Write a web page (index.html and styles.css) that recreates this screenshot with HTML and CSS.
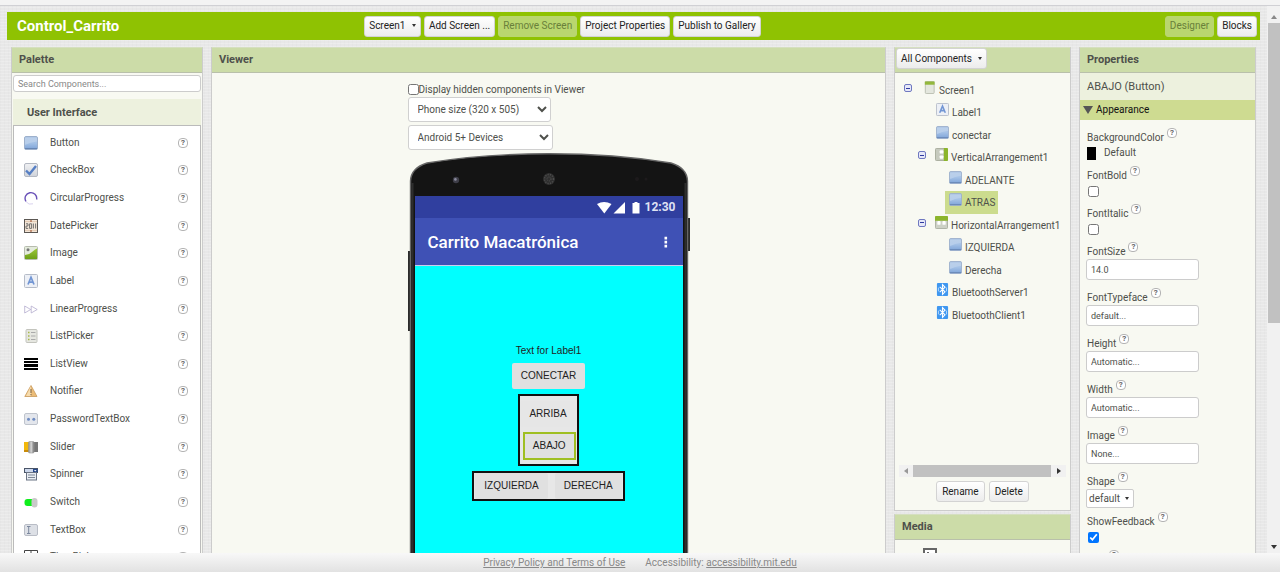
FILE: index.html
```html
<!DOCTYPE html>
<html lang="en">
<head>
<meta charset="utf-8">
<title>Control_Carrito</title>
<link rel="stylesheet" href="styles.css">
</head>
<body>
<svg class="defs" aria-hidden="true">
  <defs>
    <linearGradient id="blue" x1="0" y1="0" x2="0" y2="1"><stop offset="0" stop-color="#a9c3e4"/><stop offset=".5" stop-color="#a4c1e6"/><stop offset="1" stop-color="#7da3d8"/></linearGradient>
    <linearGradient id="grey" x1="0" y1="0" x2="0" y2="1"><stop offset="0" stop-color="#f0f1f3"/><stop offset="1" stop-color="#cfd3da"/></linearGradient>
    <linearGradient id="green" x1="0" y1="0" x2="0" y2="1"><stop offset="0" stop-color="#9cc63a"/><stop offset="1" stop-color="#6da017"/></linearGradient>
    <linearGradient id="metal"><stop offset="0" stop-color="#8a8a8a"/><stop offset=".5" stop-color="#d8d8d8"/><stop offset="1" stop-color="#777"/></linearGradient>
  </defs>
  <symbol id="i-button" viewBox="0 0 14 14"><rect x=".5" y=".5" width="13" height="13" rx="1.5" fill="url(#blue)" stroke="#9db0cc"/><path d="M1 1.5h12v4Q6 6 1 9z" fill="#fff" opacity=".22"/><path d="M1 12.5h12" stroke="#6786b4"/></symbol>
  <symbol id="i-check" viewBox="0 0 14 14"><rect x=".5" y=".5" width="13" height="13" rx="1.5" fill="url(#grey)" stroke="#b3b8c2"/><path d="M2 7.5 5.5 11 12 3" fill="none" stroke="#567fc4" stroke-width="2.4"/></symbol>
  <symbol id="i-circ" viewBox="0 0 14 14"><path d="M2 10.500A5.800 5.800 0 1 1 12.600 8.500" fill="none" stroke="#6a52b8" stroke-width="1.4"/><path d="M2 10.500A5.800 5.800 0 0 0 9 12.800" fill="none" stroke="#d9d2ee"/></symbol>
  <symbol id="i-date" viewBox="0 0 14 14"><rect x=".5" y=".5" width="13" height="13" fill="#f3e6d8" stroke="#5b5753"/><path d="M1 2.5h12M1 11.5h12" stroke="#e4ccb6"/><path d="M7 1v2M7 11v2" stroke="#9b4b28"/><path d="M2 4.8h2v2.2H2v2.4h2.2M5.6 4.8h2v4.6h-2zM9.4 4.5v5M11.6 4.5v5" fill="none" stroke="#666" stroke-width=".9"/></symbol>
  <symbol id="i-image" viewBox="0 0 14 14"><rect x=".5" y=".5" width="13" height="13" rx="1" fill="#e4ebdc" stroke="#b7bcae"/><path d="M1 9Q5 9 8 6t5-3.500V13H1z" fill="url(#green)"/><circle cx="4" cy="3.800" r="1.500" fill="#777"/></symbol>
  <symbol id="i-label" viewBox="0 0 14 14"><rect x=".5" y=".5" width="13" height="13" rx="1" fill="#edf0f6" stroke="#b6bcc8"/><path d="M4 10.500 7 3.200l3 7.300M5 8.200h4" fill="none" stroke="#7296d4" stroke-width="1.700"/></symbol>
  <symbol id="i-linear" viewBox="0 0 14 14"><path d="M.7 4v7l6-3.500zM7.200 4v7l6-3.500z" fill="#fff" stroke="#aaa2c8" stroke-width=".7"/></symbol>
  <symbol id="i-list" viewBox="0 0 14 14"><rect x="2" y=".5" width="11" height="13" rx="1" fill="#e6e7e1" stroke="#c3c4bd"/><path d="M4 3.500h1.500M4 7h1.500M4 10.500h1.500" stroke="#a8b84b" stroke-width="1.500"/><path d="M7 3.500h4.500M7 7h4.500M7 10.500h4.500" stroke="#aaa"/></symbol>
  <symbol id="i-lview" viewBox="0 0 14 14"><path d="M0 1h14v2.200H0zM0 4.200h14v2.200H0zM0 7.400h14v2.200H0zM0 10.600h14v2.200H0z" fill="#000"/></symbol>
  <symbol id="i-notif" viewBox="0 0 14 14"><path d="M7 1.500 13 12.500H.8z" fill="#ebbc78" stroke="#c99a5c" stroke-width=".8"/><path d="M7 2v10H2z" fill="#f6dcae"/><path d="M7 5v4M7 10v1.200" stroke="#8d7350" stroke-width="1.200"/></symbol>
  <symbol id="i-pass" viewBox="0 0 14 14"><rect x=".5" y="1.500" width="13" height="11" rx="1.500" fill="#e3e6ec" stroke="#bfc4cd"/><circle cx="4.500" cy="7.300" r="1.500" fill="#6f8cc2"/><circle cx="9.800" cy="7.300" r="1.500" fill="#6f8cc2"/></symbol>
  <symbol id="i-slider" viewBox="0 0 14 14"><path d="M0 2h5v10H0z" fill="#f2b80c"/><path d="M0 10h5v2H0z" fill="#c98b08"/><path d="M9 2h5v10H9z" fill="#777"/><rect x="4.500" y="1.500" width="5.500" height="11.500" rx="1" fill="url(#metal)" stroke="#999" stroke-width=".6"/></symbol>
  <symbol id="i-spin" viewBox="0 0 14 14"><rect x=".5" y="1.500" width="13" height="4" fill="#cdd8ec" stroke="#4a5568"/><path d="M9 2h4.500v3.500H9z" fill="#27498c"/><path d="m10 3 1.200 1.600L12.500 3z" fill="#fff"/><rect x="2.500" y="5.500" width="10" height="7.500" fill="#e8ecf2" stroke="#6b7484"/><path d="M4 8h7M4 10.500h7" stroke="#7d8796"/></symbol>
  <symbol id="i-switch" viewBox="0 0 14 14"><rect x=".5" y="4" width="11" height="7" rx="3" fill="#10ee1c"/><rect x="7.500" y="3" width="6" height="9.500" rx="3" fill="#c9c9c9"/></symbol>
  <symbol id="i-text" viewBox="0 0 14 14"><rect x=".5" y="1.500" width="13" height="11" rx="1.500" fill="#dde0e6" stroke="#b9bdc6"/><path d="M3 3.500h3.500M4.700 3.500v7M3 10.500h3.500" stroke="#7c889e" fill="none"/></symbol>
  <symbol id="i-time" viewBox="0 0 14 14"><path d="M.5.500h13v13H.5zM.5 6h13M7 .5v13" fill="#fff" stroke="#444"/></symbol>
  <symbol id="i-screen" viewBox="0 0 14 14"><rect x="2.500" y=".5" width="9.500" height="13" rx="1" fill="#e4e7de" stroke="#b9bdb0"/><path d="M2 .5h10.500v3.500H2z" fill="#93b83c"/></symbol>
  <symbol id="i-vert" viewBox="0 0 14 14"><rect x=".5" y=".5" width="13" height="13" rx="1" fill="#c6cabe" stroke="#a5aa9b"/><path d="M9.500 0H13q1 0 1 1v12q0 1-1 1H9.500z" fill="#8cb52c"/><rect x="5" y="2.500" width="4" height="3.500" rx="1" fill="#fff"/><rect x="5" y="8" width="4" height="3.500" rx="1" fill="#fff"/></symbol>
  <symbol id="i-horiz" viewBox="0 0 14 14"><rect x=".5" y=".5" width="13" height="13" rx="1" fill="#cdd1c6" stroke="#a9ada0"/><path d="M0 5V1q0-1 1-1h12q1 0 1 1v4z" fill="#8cb52c"/><rect x="2.500" y="5.500" width="3.500" height="4" rx="1" fill="#fff"/><rect x="8" y="5.500" width="3.500" height="4" rx="1" fill="#fff"/></symbol>
  <symbol id="i-bt" viewBox="0 0 14 14"><rect x="1" width="12" height="14" rx="1" fill="#3f97f0"/><path d="M4 4.200 9.700 9.500 7 12.300V1.700l2.700 2.800L4 9.800" fill="none" stroke="#fff" stroke-width="1.200"/><path d="M11.300 5v4M2.600 5v4" stroke="#b9dafb"/></symbol>
</svg>

<div class="strip"></div>
<div class="main">
  <div class="content">
    <header class="bar">
      <h1>Control_Carrito</h1>
      <div class="bar-mid">
        <button class="btn">Screen1 <i class="caret"></i></button>
        <button class="btn">Add Screen ...</button>
        <button class="btn off" disabled>Remove Screen</button>
        <button class="btn">Project Properties</button>
        <button class="btn">Publish to Gallery</button>
      </div>
      <div class="bar-end">
        <button class="btn off" disabled>Designer</button>
        <button class="btn">Blocks</button>
      </div>
    </header>

    <div class="columns">
      <section class="panel palette">
        <h2 class="head">Palette</h2>
        <input class="search" type="text" placeholder="Search Components..." aria-label="Search Components">
        <h3 class="group">User Interface</h3>
        <div class="listbox"><ul class="list">
          <li><svg class="ic"><use href="#i-button"/></svg><span>Button</span><button class="help">?</button></li>
          <li><svg class="ic"><use href="#i-check"/></svg><span>CheckBox</span><button class="help">?</button></li>
          <li><svg class="ic"><use href="#i-circ"/></svg><span>CircularProgress</span><button class="help">?</button></li>
          <li><svg class="ic"><use href="#i-date"/></svg><span>DatePicker</span><button class="help">?</button></li>
          <li><svg class="ic"><use href="#i-image"/></svg><span>Image</span><button class="help">?</button></li>
          <li><svg class="ic"><use href="#i-label"/></svg><span>Label</span><button class="help">?</button></li>
          <li><svg class="ic"><use href="#i-linear"/></svg><span>LinearProgress</span><button class="help">?</button></li>
          <li><svg class="ic"><use href="#i-list"/></svg><span>ListPicker</span><button class="help">?</button></li>
          <li><svg class="ic crisp"><use href="#i-lview"/></svg><span>ListView</span><button class="help">?</button></li>
          <li><svg class="ic"><use href="#i-notif"/></svg><span>Notifier</span><button class="help">?</button></li>
          <li><svg class="ic"><use href="#i-pass"/></svg><span>PasswordTextBox</span><button class="help">?</button></li>
          <li><svg class="ic"><use href="#i-slider"/></svg><span>Slider</span><button class="help">?</button></li>
          <li><svg class="ic"><use href="#i-spin"/></svg><span>Spinner</span><button class="help">?</button></li>
          <li><svg class="ic"><use href="#i-switch"/></svg><span>Switch</span><button class="help">?</button></li>
          <li><svg class="ic"><use href="#i-text"/></svg><span>TextBox</span><button class="help">?</button></li>
          <li><svg class="ic"><use href="#i-time"/></svg><span>TimePicker</span><button class="help">?</button></li>
        </ul></div>
      </section>

      <section class="panel viewer">
        <h2 class="head">Viewer</h2>
        <div class="stage">
          <label class="hidden-opt"><input type="checkbox" class="cb">Display hidden components in Viewer</label>
          <select class="sel size" aria-label="Screen size"><option>Phone size (320 x 505)</option></select>
          <select class="sel device" aria-label="Device"><option>Android 5+ Devices</option></select>
          <div class="phone">
            <svg class="shell" viewBox="0 0 282 460" aria-hidden="true">
              <rect x="0" y="98" width="4" height="80" fill="#2c2c2c"/>
              <rect x="278" y="65" width="4" height="33" fill="#2c2c2c"/>
              <path d="M2.500 460V28Q3 15 19 10 75 .8 141 .8T263 10q16 5 16.500 18v432z" fill="#141414" stroke="#666" stroke-width="1.400"/>
              <path d="M4.500 460V30M277.500 460V30" stroke="#2e2e2e" stroke-width="2"/>
              <circle cx="48" cy="27" r="3.200" fill="#3e3e48"/><circle cx="47.400" cy="26.400" r="1.300" fill="#8c8ca0"/>
              <circle cx="141" cy="26" r="6" fill="#2f2f2f"/><circle cx="141" cy="26" r="4.500" fill="none" stroke="#4c4c4c" stroke-width="1.500" stroke-dasharray="1.200 1.200"/><circle cx="141" cy="26" r="2" fill="none" stroke="#555" stroke-dasharray="1 1"/>
              <circle cx="229" cy="26" r="2" fill="#1d1a1c"/><circle cx="238" cy="26" r="1.500" fill="#1d1a1c"/>
            </svg>
            <div class="screen">
              <div class="status">
                <svg class="signals" viewBox="0 0 44 13" aria-hidden="true"><path d="M0 3Q7-.8 14.500 3L7.300 12.500z" fill="#fff"/><path d="M28 1v11.500H16.500z" fill="#fff"/><path d="M35.500 2h2V1h3v1h2v10.500h-7z" fill="#fff"/></svg>
                <span>12:30</span>
              </div>
              <div class="appbar"><span>Carrito Macatrónica</span><svg class="dots" viewBox="0 0 4 12" aria-hidden="true"><path d="M.5.800h2.600v2.600H.5zM.5 4.800h2.600v2.600H.5zM.5 8.800h2.600v2.600H.5z" fill="#fff"/></svg></div>
              <div class="canvas">
                <span class="lbl">Text for Label1</span>
                <button class="mock solo">CONECTAR</button>
                <div class="vbox"><button class="mock flat">ARRIBA</button><button class="mock picked">ABAJO</button></div>
                <div class="hbox"><button class="mock">IZQUIERDA</button><button class="mock">DERECHA</button></div>
              </div>
            </div>
          </div>
        </div>
      </section>

      <div class="side">
        <section class="panel comps">
          <div class="head tight"><button class="btn">All Components <i class="caret"></i></button></div>
          <div class="treebox"><ul class="tree">
            <li class="d0"><button class="fold" aria-label="Collapse"></button><svg class="ic"><use href="#i-screen"/></svg><span>Screen1</span></li>
            <li class="d1"><svg class="ic"><use href="#i-label"/></svg><span>Label1</span></li>
            <li class="d1"><svg class="ic"><use href="#i-button"/></svg><span>conectar</span></li>
            <li class="d1f"><button class="fold" aria-label="Collapse"></button><svg class="ic"><use href="#i-vert"/></svg><span>VerticalArrangement1</span></li>
            <li class="d2"><svg class="ic"><use href="#i-button"/></svg><span>ADELANTE</span></li>
            <li class="d2 on"><svg class="ic"><use href="#i-button"/></svg><span>ATRAS</span></li>
            <li class="d1f"><button class="fold" aria-label="Collapse"></button><svg class="ic"><use href="#i-horiz"/></svg><span>HorizontalArrangement1</span></li>
            <li class="d2"><svg class="ic"><use href="#i-button"/></svg><span>IZQUIERDA</span></li>
            <li class="d2"><svg class="ic"><use href="#i-button"/></svg><span>Derecha</span></li>
            <li class="d1"><svg class="ic"><use href="#i-bt"/></svg><span>BluetoothServer1</span></li>
            <li class="d1"><svg class="ic"><use href="#i-bt"/></svg><span>BluetoothClient1</span></li>
          </ul></div>
          <div class="hscroll"><i class="arr left"></i><i class="thumb"></i><i class="arr right"></i></div>
          <div class="actions"><button class="btn">Rename</button><button class="btn">Delete</button></div>
        </section>
        <section class="panel media">
          <h2 class="head">Media</h2>
          <svg class="pic" viewBox="0 0 14 14" aria-hidden="true"><rect x="1" y="1" width="12" height="12" fill="#fff" stroke="#666" stroke-width="2"/><path d="M4 4h2v2H4zM8 5h2v4H8z" fill="#666"/></svg>
        </section>
      </div>

      <section class="panel props">
        <h2 class="head">Properties</h2>
        <div class="target">ABAJO (Button)</div>
        <button class="section"><i class="tri"></i>Appearance</button>
        <div class="fields">
          <div class="field"><div class="name">BackgroundColor<button class="help">?</button></div><div class="ctl"><i class="swatch"></i>Default</div></div>
          <div class="field"><div class="name"><label for="fb">FontBold</label><button class="help">?</button></div><div class="ctl"><input id="fb" type="checkbox" class="cb"></div></div>
          <div class="field"><div class="name"><label for="fi">FontItalic</label><button class="help">?</button></div><div class="ctl"><input id="fi" type="checkbox" class="cb"></div></div>
          <div class="field text"><div class="name"><label for="fs">FontSize</label><button class="help">?</button></div><input id="fs" type="text" value="14.0"></div>
          <div class="field text"><div class="name"><label for="ft">FontTypeface</label><button class="help">?</button></div><input id="ft" type="text" value="default..."></div>
          <div class="field text"><div class="name"><label for="he">Height</label><button class="help">?</button></div><input id="he" type="text" value="Automatic..."></div>
          <div class="field text"><div class="name"><label for="wi">Width</label><button class="help">?</button></div><input id="wi" type="text" value="Automatic..."></div>
          <div class="field text"><div class="name"><label for="im">Image</label><button class="help">?</button></div><input id="im" type="text" value="None..."></div>
          <div class="field"><div class="name"><label for="sh">Shape</label><button class="help">?</button></div><div class="pick"><select id="sh"><option>default</option></select><i class="caret"></i></div></div>
          <div class="field"><div class="name"><label for="sf">ShowFeedback</label><button class="help">?</button></div><div class="ctl"><input id="sf" type="checkbox" class="cb" checked></div></div>
          <div class="field"><div class="name"><label for="te">Text</label><button class="help">?</button></div><input id="te" type="text" value="ABAJO"></div>
        </div>
      </section>
    </div>
  </div>
  <div class="vscroll"><i class="arr up"></i><div class="track"><i class="thumb"></i></div><i class="arr down"></i></div>
</div>
<footer class="foot"><a href="#">Privacy Policy and Terms of Use</a><span>Accessibility: <a href="#">accessibility.mit.edu</a></span></footer>
</body>
</html>
```
FILE: styles.css
```css
* { box-sizing: border-box; }
body {
  margin: 0;
  height: 100vh;
  display: flex;
  flex-direction: column;
  overflow: hidden;
  font: 10px/16px Roboto, "Liberation Sans", sans-serif;
  color: #4e504b;
  background-color: #e8e8e8;
  background-image:
    repeating-linear-gradient(0deg, rgba(255,255,255,.2) 0 1px, transparent 1px 3px),
    repeating-linear-gradient(90deg, rgba(0,0,0,.01) 0 1px, transparent 1px 4px);
}
button, input, select { font: inherit; color: inherit; margin: 0; }
button { padding: 0; border: 0; background: none; text-align: left; }
h1, h2, h3, ul { margin: 0; padding: 0; list-style: none; }
.defs { position: absolute; width: 0; height: 0; }

.strip { flex: none; height: 6px; background: #f3f3f3; border-bottom: 1px solid #d0d0d4; }
.main { flex: 1; min-height: 0; display: flex; }
.content { flex: 1; min-width: 0; padding: 6px 7px 0; overflow: hidden; }
.bar {
  display: grid;
  grid-template-columns: 28% auto 1fr;
  align-items: center;
  height: 28px;
  padding: 0 3px 0 10px;
  background: #8fc202;
}
.bar h1 { font-size: 15px; line-height: 20px; color: #fff; }
.bar-mid, .bar-end { display: flex; gap: 3px; }
.bar-end { justify-content: flex-end; }
.btn {
  height: 21px;
  padding: 0 4px;
  border: 1px solid #d3d3d3;
  border-radius: 3px;
  background: linear-gradient(#fff, #ececec);
  color: #222;
  font-weight: normal;
  line-height: 18px;
  white-space: nowrap;
  text-align: center;
}
.btn.off { background: #b9d66f; border-color: #b9d66f; color: #69803a; }
.caret {
  display: inline-block;
  margin: 0 0 2px 4px;
  border: 2px solid transparent;
  border-top: 3px solid #333;
  border-bottom: 0;
}

.columns { display: flex; gap: 8px; padding: 7px 4px 0; }
.panel { border: 1px solid #ccc; border-top-color: #d5dfc0; background: #f8f9f2; }
.head {
  height: 25px;
  padding: 0 7px;
  background: #ccdca8;
  border-bottom: 1px solid #b9c0ab;
  font-size: 11px;
  line-height: 24px;
  font-weight: bold;
}
.head.tight { padding: 0 1px; line-height: 20px; }
.head .btn { font-size: 10px; }
.palette { flex: none; width: 192px; min-height: 540px; }
.search {
  display: block;
  width: 188px;
  height: 17px;
  margin: 2px 1px 0;
  padding: 0 4px;
  border: 1px solid #ccc;
  border-radius: 3px;
  background: #fff;
  font-size: 9px;
}
.search::placeholder { color: #888; }
.group {
  height: 26px;
  margin: 7px 1px 0;
  padding: 0 14px;
  background: #edf1de;
  font-size: 11px;
  line-height: 28px;
}
.listbox { margin: 0 1px; padding-top: 3px; background: #fff; border: 1px solid #bbb; }
.list { display: grid; grid-auto-rows: 1fr; height: 442px; }
.list li { display: flex; align-items: center; padding: 0 12px 0 10px; }
.list span { flex: 1; }
.ic { flex: none; width: 14px; height: 14px; }
.crisp { shape-rendering: crispEdges; }
.list .ic { margin-right: 12px; }
.help {
  width: 10px;
  height: 10px;
  border: 1px solid #b4b4b4;
  border-radius: 4px;
  background: #fff;
  color: #666;
  font-size: 8px;
  font-weight: bold;
  line-height: 8px;
  text-align: center;
}

.viewer { flex: 1; min-width: 0; }
.stage { width: 282px; margin: 0 auto; padding-top: 9px; display: flex; flex-direction: column; align-items: flex-start; }
.cb { width: 11px; height: 11px; }
.hidden-opt { display: flex; align-items: center; height: 15px; }
.sel {
  height: 25px;
  padding: 0 0 0 5px;
  border: 1px solid #d0d0d0;
  border-radius: 3px;
  background: #fff;
}
.size { width: 143px; }
.device { width: 145px; margin-top: 3px; }
.phone { position: relative; width: 282px; margin-top: 3px; padding: 43px 7px 0; }
.shell { position: absolute; left: 0; top: 0; width: 282px; height: 460px; }
.screen { position: relative; }
.status {
  display: flex;
  align-items: center;
  justify-content: flex-end;
  gap: 4px;
  height: 22px;
  padding: 0 7px;
  background: #303f9f;
  color: #dfe2f3;
  font-size: 12px;
  font-weight: bold;
}
.signals { width: 44px; height: 13px; }
.appbar {
  display: flex;
  align-items: center;
  justify-content: space-between;
  height: 48px;
  padding: 0 15px 0 13px;
  background: #3f51b5;
  border-bottom: 1px solid #c9cdeb;
  color: #fff;
  font-size: 17px;
  line-height: 20px;
  font-weight: 500;
}
.dots { width: 4px; height: 12px; }
.canvas {
  display: flex;
  flex-direction: column;
  align-items: center;
  height: 347px;
  padding-top: 79px;
  background: #0ff;
  color: #222;
  font: 10px/12px "Liberation Sans", Arial, sans-serif;
}
.mock { height: 26px; padding: 0 9px; background: #e0e0e0; border-radius: 2px; text-align: center; }
.solo { margin: 6px 0 5px; }
.vbox, .hbox { display: flex; border: 2px solid #111; background: #e7e7e7; }
.vbox { flex-direction: column; align-items: flex-end; gap: 5px; padding: 5px 1px 4px 0; }
.flat { background: #e6e6e6; }
.picked { height: 28px; border: 2px solid #9fbf22; border-radius: 0; padding: 0 8px; }
.hbox { gap: 7px; margin-top: 5px; padding: 0 1px; }

.side { flex: none; width: 177px; display: flex; flex-direction: column; gap: 3px; }
.treebox { height: 392px; padding: 6px 0 0 7px; overflow: hidden; }
.tree { display: grid; grid-auto-rows: 1fr; height: 247px; }
.tree li { display: flex; gap: 3px; white-space: nowrap; width: max-content; padding-right: 3px; }
.tree span { line-height: 16px; padding-top: 4px; }
.d0 .ic { margin-left: 8px; }
.d1 { margin-left: 34px; }
.d1f { margin-left: 14px; }
.d1f .ic { margin-left: 6px; }
.d2 { margin-left: 43px; padding-left: 4px; }
.on { background: #ccdc8e; }
.tree .ic { margin-top: 2px; width: 13px; height: 13px; }
.fold {
  display: grid;
  place-items: center;
  width: 8px;
  height: 8px;
  margin: 5px 0 0 2px;
  border: 1px solid #6f78c0;
  border-radius: 2px;
  background: #e6e8f8;
}
.fold::before { content: ""; width: 4px; height: 1px; background: #2f3aa0; }
.hscroll { display: flex; align-items: center; height: 12px; margin: 0 4px; background: #f1f1f1; }
.hscroll .thumb { flex: 1; height: 12px; background: #c1c1c1; }
.arr { flex: none; border: 3px solid transparent; }
.left { margin: 0 5px 0 2px; border-right: 4px solid #999; }
.right { margin: 0 2px 0 6px; border-left: 4px solid #333; }
.actions { display: flex; justify-content: center; gap: 4px; padding: 4px 0 8px; }
.actions .btn { padding: 0 5px; }
.media { height: 60px; }
.pic { display: block; width: 14px; height: 14px; margin: 8px 0 0 28px; }

.props { flex: none; width: 177px; }
.target { height: 27px; padding: 0 7px; background: #edf1de; font-size: 11px; line-height: 27px; }
.section {
  display: flex;
  align-items: center;
  width: 100%;
  height: 20px;
  padding: 0 3px;
  gap: 3px;
  background: #cedb91;
  color: #111;
}
.tri { border: 5px solid transparent; border-top: 8px solid #555; border-bottom: 0; }
.fields { padding: 9px 7px 0; }
.name { display: flex; gap: 3px; height: 16px; line-height: 18px; }
.name .help { margin-top: -1px; }
.ctl { display: flex; align-items: center; height: 16px; margin-bottom: 6px; }
.ctl .cb { margin-left: 1px; }
.swatch { width: 9px; height: 13px; margin-right: 8px; background: #000; }
.field.text input {
  display: block;
  width: 113px;
  height: 21px;
  margin: 0 0 9px -1px;
  padding: 0 4px;
  border: 1px solid #ccc;
  border-radius: 3px;
  background: #fff;
  font-size: 9px;
}
.pick { position: relative; width: 48px; margin: 0 0 5px -1px; }
.pick select {
  display: block;
  appearance: none;
  width: 100%;
  height: 19px;
  padding: 0 2px;
  border: 1px solid #ccc;
  border-radius: 2px;
  background: #fff;
}
.pick .caret { position: absolute; right: 5px; top: 8px; margin: 0; }

.vscroll { flex: none; width: 13px; display: flex; flex-direction: column; align-items: center; padding: 6px 0 2px; background: #f1f1f1; }
.up { border-top: 0; border-bottom: 4px solid #888; margin: 3px 0 4px; }
.down { border-bottom: 0; border-top: 4px solid #333; margin: 4px 0 2px; }
.track { flex: 1; width: 12px; }
.track .thumb { display: block; height: 58%; background: #c1c1c1; }

.foot {
  flex: none;
  display: flex;
  justify-content: center;
  gap: 20px;
  height: 19px;
  line-height: 19px;
  background: linear-gradient(#f8f8f8, #e2e2e2);
  color: #888;
}
.foot a { color: #888; }
```
